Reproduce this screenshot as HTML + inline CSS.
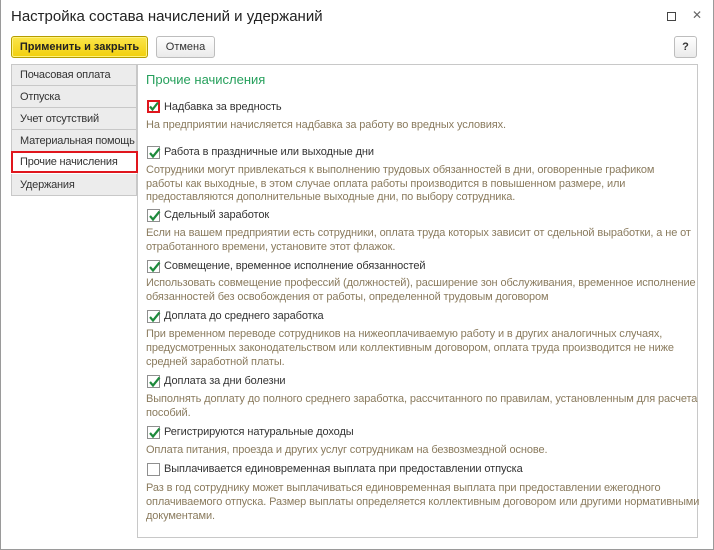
<!DOCTYPE html>
<html><head><meta charset="utf-8"><style>
*{margin:0;padding:0;box-sizing:border-box}
body{width:714px;height:550px;background:#fff;font-family:"Liberation Sans",Arial,sans-serif;position:relative;overflow:hidden;color:#333}
.win{position:absolute;left:0;top:0;width:714px;height:550px;border:1px solid #9a9a9a;border-top:none}
.abs{position:absolute;white-space:nowrap}
.title{left:11px;top:8px;font-size:15px;color:#222}
.btn{position:absolute;height:22px;border-radius:3px;font-size:11px;text-align:center;line-height:20px;white-space:nowrap}
.tab{position:absolute;left:11px;width:126px;height:22px;background:#ececec;border:1px solid #c8c8c8;border-top:none;font-size:11px;letter-spacing:-0.2px;padding-left:8px;line-height:22px;color:#333;white-space:nowrap}
.panel{position:absolute;left:137px;top:64px;width:561px;height:474px;border:1px solid #c8c8c8;background:#fff}
.cb{position:absolute;left:147px;width:13px;height:13px;border:1px solid #8f8f8f;background:#fff}
.cb svg{position:absolute;left:0;top:0}
.lab{position:absolute;left:164px;font-size:11px;letter-spacing:-0.1px;color:#333;white-space:nowrap;margin-top:1px}
.d{position:absolute;left:146px;font-size:11px;color:#8a7b5e;white-space:nowrap;letter-spacing:-0.12px}
</style></head><body>
<div class="win"></div>
<div class="abs title">Настройка состава начислений и удержаний</div>
<div class="abs" style="left:667px;top:12px;width:9px;height:9px;border:1px solid #444"></div>
<div class="abs" style="left:692px;top:8px;font-size:12px;color:#666">✕</div>
<div class="btn" style="left:11px;top:36px;width:137px;background:linear-gradient(#fbe54a,#f2cf0b);border:1px solid #b59c00;font-weight:bold;color:#222;box-shadow:inset 0 0 0 1px #fff37a">Применить и закрыть</div>
<div class="btn" style="left:156px;top:36px;width:59px;background:linear-gradient(#fff,#eaeaea);border:1px solid #bdbdbd;color:#333">Отмена</div>
<div class="btn" style="left:674px;top:36px;width:23px;background:linear-gradient(#fff,#eaeaea);border:1px solid #bdbdbd;font-weight:bold;color:#333">?</div>

<div class="tab" style="top:64px;border-top:1px solid #c8c8c8;line-height:20px">Почасовая оплата</div>
<div class="tab" style="top:86px">Отпуска</div>
<div class="tab" style="top:108px">Учет отсутствий</div>
<div class="tab" style="top:130px">Материальная помощь</div>
<div class="tab" style="top:174px">Удержания</div>
<div class="panel"></div>
<div class="tab" style="top:151px;height:22px;background:#fff;border:2px solid #e0161d;line-height:19px;padding-left:7px;width:127px">Прочие начисления</div>

<div class="abs" style="left:146px;top:72px;font-size:13px;color:#26a05c">Прочие начисления</div>

<div class="cb" style="top:100px;border:2px solid #e0161d"><svg width="11" height="11" viewBox="0 0 11 11" style="left:-1px;top:-1px"><path d="M2 5.5 L4.5 8.5 L10 1.5" stroke="#1e8a3c" stroke-width="2.2" fill="none"/></svg></div>
<div class="lab" style="top:100px">Надбавка за вредность</div>
<div class="d" style="top:119px">На предприятии начисляется надбавка за работу во вредных условиях.</div>

<div class="cb" style="top:146px"><svg width="13" height="13" viewBox="0 0 13 13"><path d="M2 6 L5 9.5 L11.5 1.5" stroke="#1e8a3c" stroke-width="2.2" fill="none"/></svg></div>
<div class="lab" style="top:145px">Работа в праздничные или выходные дни</div>
<div class="d" style="top:164px">Сотрудники могут привлекаться к выполнению трудовых обязанностей в дни, оговоренные графиком</div>
<div class="d" style="top:178px">работы как выходные, в этом случае оплата работы производится в повышенном размере, или</div>
<div class="d" style="top:191px">предоставляются дополнительные выходные дни, по выбору сотрудника.</div>

<div class="cb" style="top:209px"><svg width="13" height="13" viewBox="0 0 13 13"><path d="M2 6 L5 9.5 L11.5 1.5" stroke="#1e8a3c" stroke-width="2.2" fill="none"/></svg></div>
<div class="lab" style="top:208px">Сдельный заработок</div>
<div class="d" style="top:227px">Если на вашем предприятии есть сотрудники, оплата труда которых зависит от сдельной выработки, а не от</div>
<div class="d" style="top:241px">отработанного времени, установите этот флажок.</div>

<div class="cb" style="top:260px"><svg width="13" height="13" viewBox="0 0 13 13"><path d="M2 6 L5 9.5 L11.5 1.5" stroke="#1e8a3c" stroke-width="2.2" fill="none"/></svg></div>
<div class="lab" style="top:259px">Совмещение, временное исполнение обязанностей</div>
<div class="d" style="top:277px">Использовать совмещение профессий (должностей), расширение зон обслуживания, временное исполнение</div>
<div class="d" style="top:291px">обязанностей без освобождения от работы, определенной трудовым договором</div>

<div class="cb" style="top:310px"><svg width="13" height="13" viewBox="0 0 13 13"><path d="M2 6 L5 9.5 L11.5 1.5" stroke="#1e8a3c" stroke-width="2.2" fill="none"/></svg></div>
<div class="lab" style="top:309px">Доплата до среднего заработка</div>
<div class="d" style="top:328px">При временном переводе сотрудников на нижеоплачиваемую работу и в других аналогичных случаях,</div>
<div class="d" style="top:342px">предусмотренных законодательством или коллективным договором, оплата труда производится не ниже</div>
<div class="d" style="top:356px">средней заработной платы.</div>

<div class="cb" style="top:375px"><svg width="13" height="13" viewBox="0 0 13 13"><path d="M2 6 L5 9.5 L11.5 1.5" stroke="#1e8a3c" stroke-width="2.2" fill="none"/></svg></div>
<div class="lab" style="top:374px">Доплата за дни болезни</div>
<div class="d" style="top:393px">Выполнять доплату до полного среднего заработка, рассчитанного по правилам, установленным для расчета</div>
<div class="d" style="top:407px">пособий.</div>

<div class="cb" style="top:426px"><svg width="13" height="13" viewBox="0 0 13 13"><path d="M2 6 L5 9.5 L11.5 1.5" stroke="#1e8a3c" stroke-width="2.2" fill="none"/></svg></div>
<div class="lab" style="top:425px">Регистрируются натуральные доходы</div>
<div class="d" style="top:444px">Оплата питания, проезда и других услуг сотрудникам на безвозмездной основе.</div>

<div class="cb" style="top:463px"></div>
<div class="lab" style="top:462px">Выплачивается единовременная выплата при предоставлении отпуска</div>
<div class="d" style="top:482px">Раз в год сотруднику может выплачиваться единовременная выплата при предоставлении ежегодного</div>
<div class="d" style="top:496px">оплачиваемого отпуска. Размер выплаты определяется коллективным договором или другими нормативными</div>
<div class="d" style="top:510px">документами.</div>
</body></html>
